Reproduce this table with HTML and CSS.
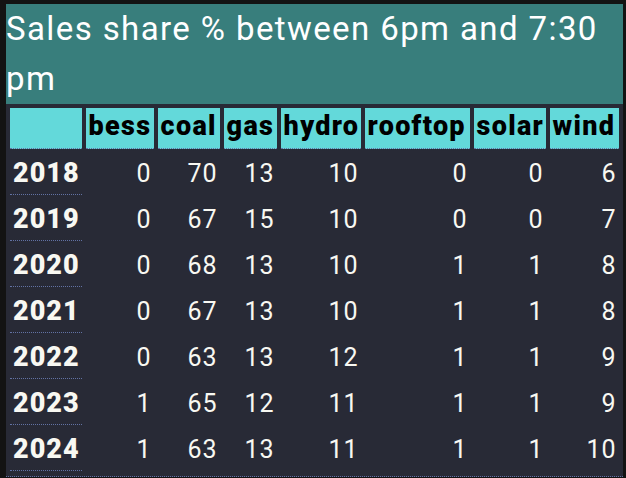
FILE: index.html
```html
<!DOCTYPE html>
<html>
<head>
<meta charset="utf-8">
<link rel="stylesheet" href="styles.css">
</head>
<body>
<div class="panel">
  <div class="title">Sales share % between 6pm and 7:30 pm</div>
  <table class="grid">
    <thead>
      <tr>
        <th class="c-idx"></th>
        <th class="c-bess">bess</th><th class="c-coal">coal</th><th class="c-gas">gas</th><th class="c-hydro">hydro</th><th class="c-roof">rooftop</th><th class="c-solar">solar</th><th class="c-wind">wind</th>
      </tr>
    </thead>
    <tbody>
      <tr><th class="year">2018</th><td>0</td><td>70</td><td>13</td><td>10</td><td>0</td><td>0</td><td>6</td></tr>
      <tr><th class="year">2019</th><td>0</td><td>67</td><td>15</td><td>10</td><td>0</td><td>0</td><td>7</td></tr>
      <tr><th class="year">2020</th><td>0</td><td>68</td><td>13</td><td>10</td><td>1</td><td>1</td><td>8</td></tr>
      <tr><th class="year">2021</th><td>0</td><td>67</td><td>13</td><td>10</td><td>1</td><td>1</td><td>8</td></tr>
      <tr><th class="year">2022</th><td>0</td><td>63</td><td>13</td><td>12</td><td>1</td><td>1</td><td>9</td></tr>
      <tr><th class="year">2023</th><td>1</td><td>65</td><td>12</td><td>11</td><td>1</td><td>1</td><td>9</td></tr>
      <tr><th class="year">2024</th><td>1</td><td>63</td><td>13</td><td>11</td><td>1</td><td>1</td><td>10</td></tr>
    </tbody>
  </table>
</div>
</body>
</html>
```
FILE: styles.css
```css
html, body {
  margin: 0;
  background: #131313;
}
body {
  padding: 4px 0 0 6px;
  font-family: Roboto, "Noto Sans", sans-serif;
}
.panel {
  display: inline-block;
  background: #282a36;
  color: #f8f8f2;
}
.title {
  background: #387e7c;
  color: #ffffff;
  font-size: 33px;
  letter-spacing: 1.4px;
  line-height: 50px;
  width: 0;
  min-width: 100%;
}
.grid {
  border-collapse: separate;
  border-spacing: 4px;
  padding-bottom: 1px;
  border-bottom: 1px dotted #6272a4;
}
.grid thead th {
  background: #63d9da;
  color: #000;
  font-weight: 900;
  font-size: 27px;
  letter-spacing: 1.3px;
  line-height: 30px;
  padding: 3px 1px 7px 3px;
  border-bottom: 1px dotted #6272a4;
  text-align: left;
  white-space: nowrap;
}
.c-idx { width: 67px; }
.c-bess { width: 64px; }
.c-coal { width: 58px; }
.c-gas { width: 49px; }
.c-hydro { width: 76px; }
.c-roof { width: 101px; }
.c-solar { width: 68px; }
.c-wind { width: 65px; }
.grid th.year {
  font-weight: 900;
  font-size: 27px;
  letter-spacing: 1px;
  line-height: 30px;
  text-align: left;
  padding: 5px 2px 6px 3px;
  border-bottom: 1px dotted #6272a4;
}
.grid td {
  font-size: 25px;
  letter-spacing: 1px;
  line-height: 30px;
  text-align: right;
  padding: 6px 2px 6px 2px;
}
```
